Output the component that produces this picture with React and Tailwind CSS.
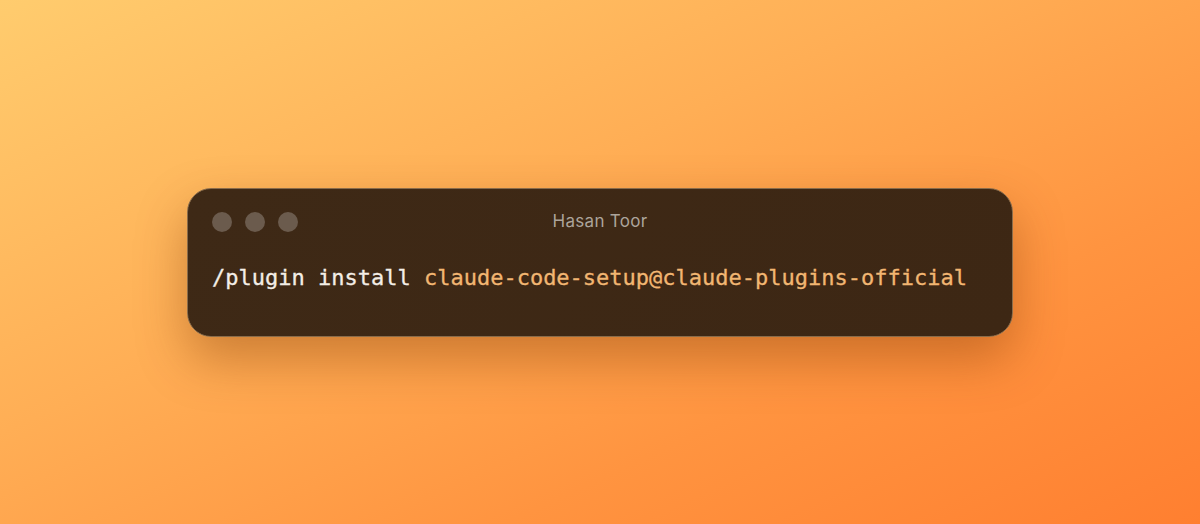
export default function App() {
  return (
    <div className="w-[1200px] h-[524px] flex items-center justify-center bg-[linear-gradient(155deg,#ffcc6e_0%,#ffae55_40%,#ff9440_70%,#ff7f30_100%)]">
      <div className="w-[826px] h-[149px] rounded-[24px] border border-[#8a6c4a] bg-[linear-gradient(135deg,#3e2916,#3d2714)] shadow-[0_22px_50px_rgba(120,50,0,0.38)] flex flex-col px-[24px]">
        <div className="relative h-[20px] mt-[23px] flex items-center">
          <div className="flex gap-[13px]">
            <div className="w-[20px] h-[20px] rounded-full bg-[#6b5b4d]" />
            <div className="w-[20px] h-[20px] rounded-full bg-[#6b5b4d]" />
            <div className="w-[20px] h-[20px] rounded-full bg-[#6b5b4d]" />
          </div>
          <div className="absolute left-0 right-0 text-center text-[17px] text-[#aca49b] font-['Inter',sans-serif] tracking-[0.3px]">
            Hasan Toor
          </div>
        </div>
        <div className="mt-[32px] font-['DejaVu_Sans_Mono',monospace] text-[22px] leading-[28px] whitespace-nowrap [-webkit-text-stroke:0.3px_currentColor]">
          <span className="text-[#f4eee6]">/plugin install </span>
          <span className="text-[#f2b672]">claude-code-setup@claude-plugins-official</span>
        </div>
      </div>
    </div>
  );
}
